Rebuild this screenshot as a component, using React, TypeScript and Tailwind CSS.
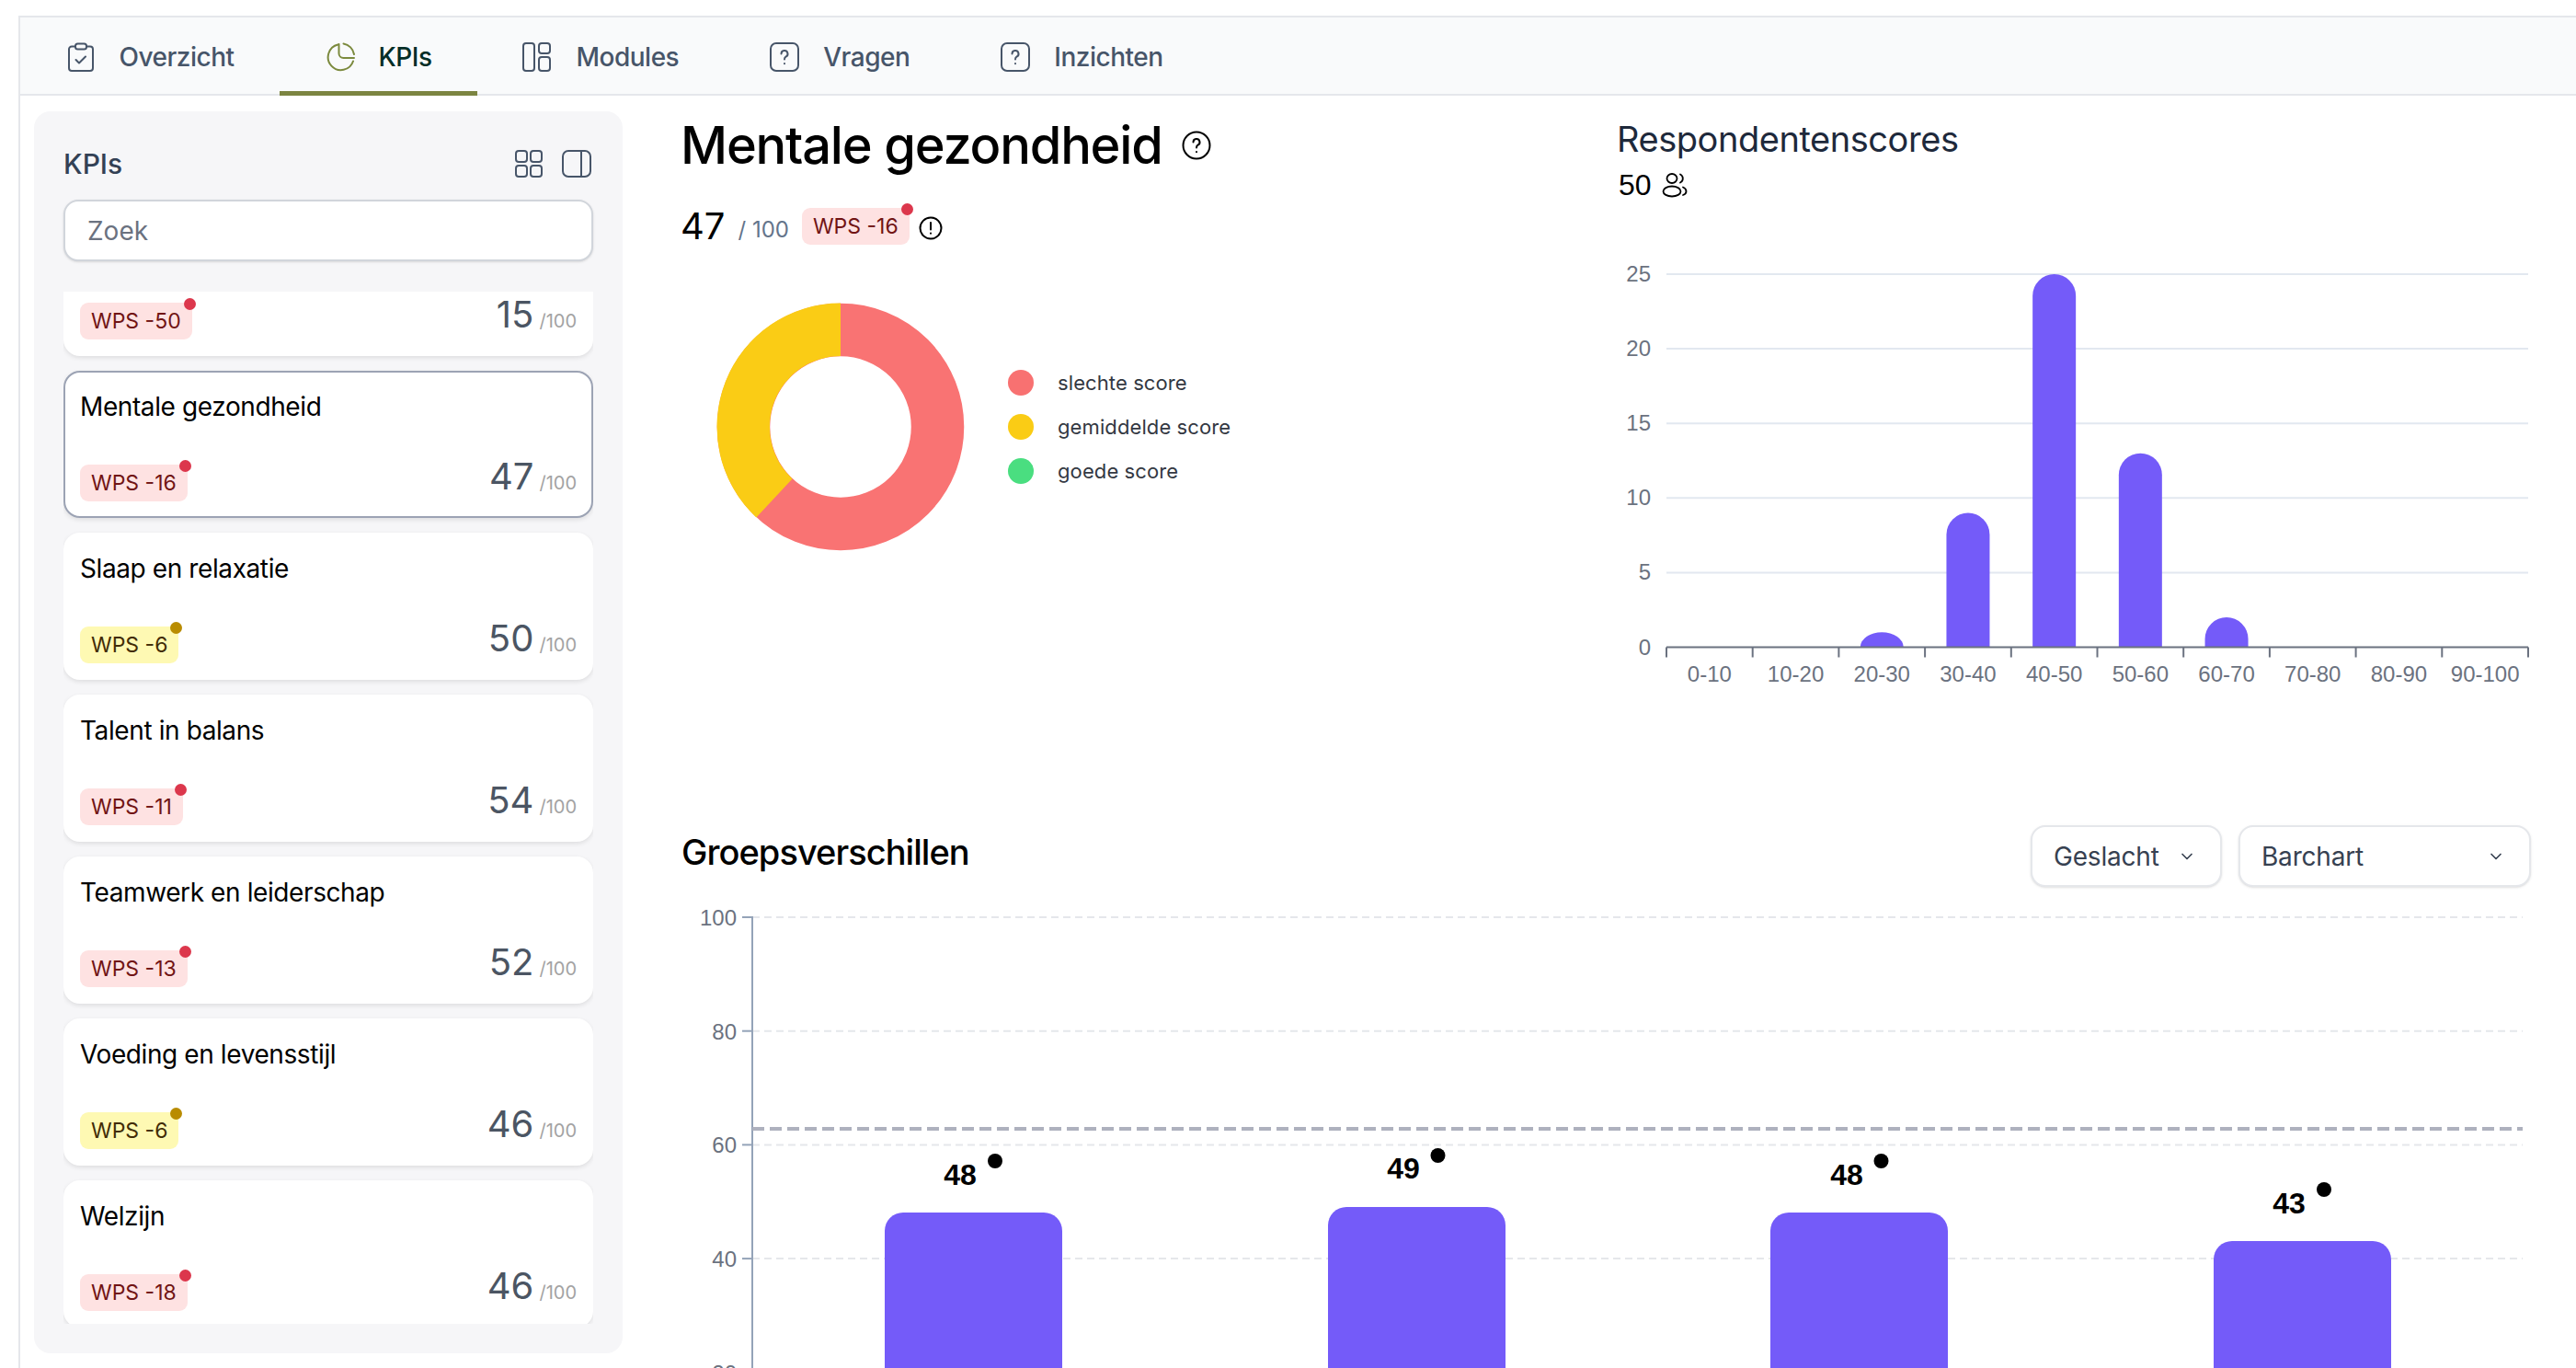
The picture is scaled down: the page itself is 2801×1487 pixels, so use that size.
import { ChevronDown } from 'lucide-react'

const kpis = [
    { title: '', wps: -50, score: 15, tone: 'red' },
    { title: 'Mentale gezondheid', wps: -16, score: 47, tone: 'red', active: true },
    { title: 'Slaap en relaxatie', wps: -6, score: 50, tone: 'yellow' },
    { title: 'Talent in balans', wps: -11, score: 54, tone: 'red' },
    { title: 'Teamwerk en leiderschap', wps: -13, score: 52, tone: 'red' },
    { title: 'Voeding en levensstijl', wps: -6, score: 46, tone: 'yellow' },
    { title: 'Welzijn', wps: -18, score: 46, tone: 'red' },
]

const ClipboardIcon = () => (
    <svg width="32" height="32" viewBox="0 0 32 32" fill="none" stroke="#475569" strokeWidth="2" strokeLinecap="round" strokeLinejoin="round">
        <path d="M10 4.5H6a3 3 0 0 0-3 3V28a3 3 0 0 0 3 3h20a3 3 0 0 0 3-3V7.500a3 3 0 0 0-3-3h-4" />
        <rect x="10" y="1.500" width="12" height="6" rx="2.500" />
        <path d="M10.500 19l3.500 3.500 7-7" />
    </svg>
)

const PieIcon = () => (
    <svg width="32" height="32" viewBox="0 0 32 32" fill="none" stroke="#7c8a3e" strokeWidth="2" strokeLinecap="round" strokeLinejoin="round">
        <path d="M13.500 2.500A14 14 0 1 0 30 20.500" />
        <path d="M14.500 2v10a5 5 0 0 0 5 5h11.500" />
        <path d="M19.500 1.500A14 14 0 0 1 31 13" />
    </svg>
)

const ModulesIcon = () => (
    <svg width="32" height="32" viewBox="0 0 32 32" fill="none" stroke="#475569" strokeWidth="2">
        <rect x="1" y="1" width="12" height="30" rx="3" />
        <rect x="18" y="1" width="12" height="11" rx="3" />
        <rect x="18" y="16" width="12" height="15" rx="3" />
    </svg>
)

const HelpSquareIcon = () => (
    <svg width="32" height="32" viewBox="0 0 32 32" fill="none" stroke="#475569" strokeWidth="2" strokeLinecap="round">
        <rect x="1" y="1" width="30" height="30" rx="6" />
        <path d="M12.500 12.500a3.500 3.500 0 1 1 5 3.200c-1 .6-1.500 1.300-1.500 2.800" />
        <path d="M16 23v.2" />
    </svg>
)

const GridIcon = () => (
    <svg width="32" height="32" viewBox="0 0 32 32" fill="none" stroke="#475569" strokeWidth="2">
        <rect x="2" y="2" width="12" height="12" rx="3" />
        <rect x="18" y="2" width="12" height="12" rx="3" />
        <rect x="2" y="18" width="12" height="12" rx="3" />
        <rect x="18" y="18" width="12" height="12" rx="3" />
    </svg>
)

const PanelIcon = () => (
    <svg width="32" height="32" viewBox="0 0 32 32" fill="none" stroke="#475569" strokeWidth="2">
        <rect x="1" y="2" width="30" height="28" rx="6" />
        <path d="M21 2v28" />
    </svg>
)

const CircleHelp = () => (
    <svg width="32" height="32" viewBox="0 0 32 32" fill="none" stroke="#000" strokeWidth="2" strokeLinecap="round">
        <circle cx="16" cy="16" r="14.500" />
        <path d="M12.500 12.500a3.500 3.500 0 1 1 5 3.200c-1 .6-1.500 1.300-1.500 2.800" />
        <path d="M16 23v.2" />
    </svg>
)

const CircleInfo = () => (
    <svg width="26" height="26" viewBox="0 0 26 26" fill="none" stroke="#000" strokeWidth="2" strokeLinecap="round">
        <circle cx="13" cy="13" r="11.500" />
        <path d="M13 7v7.500" />
        <path d="M13 18.500v.2" />
    </svg>
)

const UsersIcon = () => (
    <svg width="28" height="28" viewBox="0 0 28 28" fill="none" stroke="#000" strokeWidth="1.800" strokeLinecap="round">
        <ellipse cx="11" cy="7" rx="5.500" ry="5" />
        <ellipse cx="11" cy="21" rx="9.500" ry="5.500" />
        <path d="M20 2.500a5 5 0 0 1 0 9" />
        <path d="M23 16.500c2.500 1 3.500 2.800 3.500 4.500s-1 3.200-3.500 4" />
    </svg>
)

function WpsBadge({ wps, tone }: { wps: number; tone: string }) {
    return (
        <span
            className={`relative inline-flex h-[40px] items-center rounded-[9px] px-[12px] text-[23px] ${
                tone === 'red' ? 'bg-[#fee2e2] text-[#711414]' : 'bg-[#fef9b3] text-[#422c06]'
            }`}
        >
            WPS {wps}
            <span className={`absolute right-[-4px] top-[-5px] h-[13px] w-[13px] rounded-full ${tone === 'red' ? 'bg-[#dc374c]' : 'bg-[#b98c00]'}`} />
        </span>
    )
}

function KpiCard({ title, wps, score, tone, active }: { title: string; wps: number; score: number; tone: string; active?: boolean }) {
    return (
        <div
            className={`flex h-[160px] shrink-0 flex-col justify-between rounded-[18px] bg-white px-[16px] pb-[16px] pt-[20px] shadow-[0_2px_5px_rgba(0,0,0,0.1)] ${
                active ? 'border-2 border-[#9ca3b4]' : 'border-2 border-white'
            }`}
        >
            <div className="h-[34px] text-[28px] leading-[34px] tracking-[-0.4px] text-black">{title}</div>
            <div className="flex items-end justify-between">
                <WpsBadge wps={wps} tone={tone} />
                <div className="mb-[5px] flex items-baseline">
                    <span className="text-[40px] leading-[44px] text-[#4b5563]">{score}</span>
                    <span className="ml-[6px] text-[20px] text-[#a3a3a3]">/100</span>
                </div>
            </div>
        </div>
    )
}

function Sidebar() {
    return (
        <aside className="ml-[15px] mt-[17px] flex h-[1350px] w-[640px] shrink-0 flex-col rounded-[18px] bg-[#f6f6f8] px-[32px]">
            <div className="flex h-[96px] shrink-0 items-center justify-between pr-[2px] pt-[18px]">
                <span className="text-[30px] font-medium leading-[36px] text-[#334155]">KPIs</span>
                <div className="flex gap-[20px]">
                    <GridIcon />
                    <PanelIcon />
                </div>
            </div>
            <div className="flex h-[67px] shrink-0 items-center rounded-[16px] border-2 border-[#d1d5db] bg-white px-[24px] text-[28px] text-[#6b7280] shadow-sm">
                Zoek
            </div>
            <div className="mt-[33px] h-[1122px] overflow-hidden">
                <div className="-mt-[90px] flex flex-col gap-[16px]">
                    {kpis.map((k) => (
                        <KpiCard key={k.wps} {...k} />
                    ))}
                </div>
            </div>
        </aside>
    )
}

const chartFont = '"Liberation Sans", Arial, sans-serif'

// Pie slices drawn on a 270x270 box, radius 134.5 and hole 77
function Donut() {
    return (
        <svg width="270" height="270" viewBox="0 0 270 270">
            <circle cx="135" cy="135" r="105.500" fill="none" stroke="#f97373" strokeWidth="57.500" />
            <path d="M135 .5A134.500 134.500 0 0 0 43.300 233.400L82.500 191.400A77 77 0 0 1 135 58Z" fill="#facc15" />
        </svg>
    )
}

const legend = [
    { label: 'slechte score', color: 'bg-[#f87171]' },
    { label: 'gemiddelde score', color: 'bg-[#facc15]' },
    { label: 'goede score', color: 'bg-[#4ade80]' },
]

function Histogram() {
    const labels = ['0-10', '10-20', '20-30', '30-40', '40-50', '50-60', '60-70', '70-80', '80-90', '90-100']
    const values = [0, 0, 1, 9, 25, 13, 2, 0, 0, 0]
    const ticks = [25, 20, 15, 10, 5, 0]
    const left = 54
    const step = 93.700
    const base = 443.500
    const unit = 16.220
    return (
        <svg width="994" height="490" viewBox="0 0 994 490" style={{ fontFamily: chartFont }}>
            {ticks.map((t) => {
                const y = base - t * unit
                return (
                    <g key={t}>
                        {t > 0 && <line x1={left} x2={left + step * 10} y1={y} y2={y} stroke="#e2e8f0" strokeWidth="2" />}
                        <text x={left - 17} y={y + 8} textAnchor="end" fontSize="24" fill="#6b7280">{t}</text>
                    </g>
                )
            })}
            {values.map((v, i) => {
                if (!v) return null
                const x = left + step * i + step / 2 - 23.500
                const r = Math.min(23.500, v * unit)
                const top = base - v * unit
                return <path key={i} d={`M${x} ${base}V${top + r}A23.500 ${r} 0 0 1 ${x + 47} ${top + r}V${base}Z`} fill="#745bf9" />
            })}
            <line x1={left} x2={left + step * 10} y1={base} y2={base} stroke="#6b7280" strokeWidth="2" />
            {labels.map((l, i) => (
                <g key={l}>
                    <line x1={left + step * i} x2={left + step * i} y1={base} y2={base + 11} stroke="#6b7280" strokeWidth="2" />
                    <text x={left + step * i + step / 2} y={base + 37} textAnchor="middle" fontSize="24" fill="#6b7280">{l}</text>
                </g>
            ))}
            <line x1={left + step * 10} x2={left + step * 10} y1={base} y2={base + 11} stroke="#6b7280" strokeWidth="2" />
        </svg>
    )
}

function GroupChart() {
    const ticks = [100, 80, 60, 40, 20]
    const bars = [
        { x: 220, top: 1318, value: 48, labelX: 302, labelY: 1277, dotX: 340, dotY: 1262 },
        { x: 702, top: 1312, value: 49, labelX: 784, labelY: 1270, dotX: 821.500, dotY: 1256 },
        { x: 1183, top: 1318, value: 48, labelX: 1266, labelY: 1277, dotX: 1303.500, dotY: 1262 },
        { x: 1665, top: 1349, value: 43, labelX: 1747, labelY: 1308, dotX: 1785, dotY: 1293 },
    ]
    // chart svg starts at page x 742, y 980
    const yOf = (page: number) => page - 980
    return (
        <svg width="2010" height="507" viewBox="0 0 2010 507" style={{ fontFamily: chartFont }}>
            {ticks.map((t, i) => {
                const y = yOf(997 + i * 123.700)
                return (
                    <g key={t}>
                        <line x1="76" x2="2001" y1={y} y2={y} stroke="#e5e7eb" strokeWidth="2" strokeDasharray="8 5" />
                        <line x1="65" x2="76" y1={y} y2={y} stroke="#94a3b8" strokeWidth="2" />
                        <text x="59" y={y + 9} textAnchor="end" fontSize="24" fill="#6b7280">{t}</text>
                    </g>
                )
            })}
            <line x1="76" x2="76" y1={yOf(996)} y2="507" stroke="#94a3b8" strokeWidth="2" />
            <line x1="76" x2="2001" y1={yOf(1227)} y2={yOf(1227)} stroke="#aeb1be" strokeWidth="4" strokeDasharray="13 6" />
            {bars.map((b) => (
                <g key={b.x}>
                    <rect x={b.x} y={yOf(b.top)} width="193" height="300" rx="20" fill="#745bf9" />
                    <text x={b.labelX} y={yOf(b.labelY) + 11} textAnchor="middle" fontSize="32" fontWeight="700" fill="#000">{b.value}</text>
                    <circle cx={b.dotX} cy={yOf(b.dotY)} r="8" fill="#000" />
                </g>
            ))}
        </svg>
    )
}

function SelectBox({ label, width }: { label: string; width: string }) {
    return (
        <div className={`flex h-[67px] items-center justify-between rounded-[16px] border-2 border-[#e5e7eb] bg-white pl-[23px] pr-[26px] text-[28px] tracking-[-0.2px] text-[#374151] shadow-sm ${width}`}>
            {label}
            <ChevronDown size={20} strokeWidth={2} />
        </div>
    )
}

const tabs = [
    { label: 'Overzicht', icon: <ClipboardIcon /> },
    { label: 'KPIs', icon: <PieIcon />, active: true },
    { label: 'Modules', icon: <ModulesIcon /> },
    { label: 'Vragen', icon: <HelpSquareIcon /> },
    { label: 'Inzichten', icon: <HelpSquareIcon /> },
]

export default function App() {
    return (
        <div className="h-[1487px] overflow-hidden bg-white pt-[17px]" style={{ fontFamily: 'Inter, sans-serif' }}>
            <div className="ml-[20px] h-full border-l-2 border-t-2 border-[#e5e7eb]">
                {/* Tabs */}
                <nav className="flex h-[85px] border-b-2 border-[#e5e7eb] bg-[#f9fafb]">
                    {tabs.map((t) => (
                        <div
                            key={t.label}
                            className={`-mb-[2px] flex h-[85px] items-center gap-[26px] px-[49.5px] text-[28px] font-medium tracking-[-0.5px] ${
                                t.active ? 'border-b-[5px] border-[#7c8541] pt-[5px] text-[#052e27]' : 'text-[#475569]'
                            }`}
                        >
                            {t.icon}
                            {t.label}
                        </div>
                    ))}
                </nav>

                <div className="flex">
                    <Sidebar />

                    {/* Main content */}
                    <main className="ml-[65px] w-[2010px] shrink-0">
                        <div className="flex h-[793px]">
                            <div className="w-[1016px] shrink-0">
                                <div className="-ml-[2px] mt-[18px] flex h-[72px] items-center gap-[21px]">
                                    <h1 className="text-[56px] font-medium leading-[72px] tracking-[-1.2px] text-black">Mentale gezondheid</h1>
                                    <CircleHelp />
                                </div>
                                <div className="-ml-[2px] mt-[30px] flex items-center">
                                    <span className="text-[40px] leading-[44px] text-black">47</span>
                                    <span className="ml-[14px] mt-[8px] text-[24px] text-[#64748b]">/ 100</span>
                                    <span className="ml-[14px]">
                                        <WpsBadge wps={-16} tone="red" />
                                    </span>
                                    <span className="ml-[10px] mt-[4px] flex">
                                        <CircleInfo />
                                    </span>
                                </div>
                                <div className="ml-[37px] mt-[61px] flex items-center gap-[47px]">
                                    <Donut />
                                    <div className="flex flex-col gap-[20px]">
                                        {legend.map((l) => (
                                            <div key={l.label} className="flex h-[28px] items-center gap-[26px] text-[22px] tracking-[0.1px] text-[#333842]">
                                                <span className={`h-[28px] w-[28px] rounded-full ${l.color}`} />
                                                {l.label}
                                            </div>
                                        ))}
                                    </div>
                                </div>
                            </div>
                            <div className="min-w-0 flex-1">
                                <h2 className="mt-[23px] text-[38px] leading-[48px] tracking-[-0.45px] text-[#1e293b]">Respondentenscores</h2>
                                <div className="ml-[2px] mt-[2px] flex items-center gap-[11px] text-[32px] text-black" style={{ fontFamily: chartFont }}>
                                    50 <UsersIcon />
                                </div>
                                <div className="mt-[35px]">
                                    <Histogram />
                                </div>
                            </div>
                        </div>

                        <div className="flex h-[100px] items-start justify-between">
                            <h2 className="-ml-[1px] mt-[5px] text-[38px] font-medium leading-[48px] tracking-[-0.95px] text-black">Groepsverschillen</h2>
                            <div className="flex gap-[18px]">
                                <SelectBox label="Geslacht" width="w-[208px]" />
                                <SelectBox label="Barchart" width="w-[318px]" />
                            </div>
                        </div>
                        <div className="-mt-[17px]">
                            <GroupChart />
                        </div>
                    </main>
                </div>
            </div>
        </div>
    )
}
